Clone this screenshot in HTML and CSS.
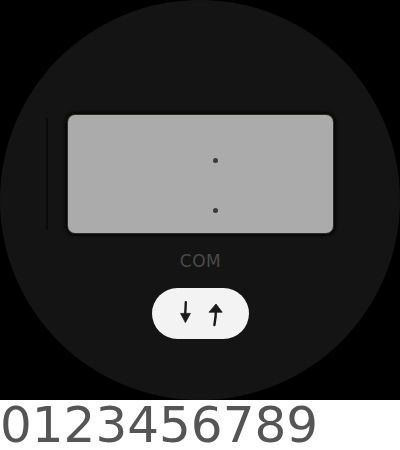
FILE: index.html
```html
<!DOCTYPE html>
<html>
<head>
<meta charset="utf-8">
<link rel="stylesheet" href="styles.css">
</head>
<body>
<div class="watch">
  <div class="face">
    <div class="display-row">
      <div class="rule"></div>
      <div class="screen">
        <span class="dot"></span>
        <span class="dot"></span>
      </div>
    </div>
    <div class="label">COM</div>
    <button class="swap" type="button" aria-label="swap">
      <svg width="46" height="26" viewBox="0 0 46 26" fill="none">
        <path d="M7.8 1.2 Q7.6 8 7.1 14" stroke="#1a1a1a" stroke-width="2.4" stroke-linecap="round"/>
        <path d="M2.6 12.4 L12.4 12.4 L7.4 21.6 Z" fill="#1a1a1a" stroke="#1a1a1a" stroke-width="0.8" stroke-linejoin="round"/>
        <path d="M38 6 Q38 16 36.4 24" stroke="#1a1a1a" stroke-width="2.4" stroke-linecap="round"/>
        <path d="M31 11.2 L44.2 11.2 L38 3 Z" fill="#1a1a1a" stroke="#1a1a1a" stroke-width="0.8" stroke-linejoin="round"/>
      </svg>
    </button>
  </div>
</div>
<div class="digits">0123456789</div>
</body>
</html>
```
FILE: styles.css
```css
html, body {
  margin: 0;
  padding: 0;
  background: #ffffff;
}

.watch {
  width: 400px;
  height: 400px;
  background: #000000;
}

.face {
  width: 400px;
  height: 400px;
  border-radius: 50%;
  background: #141414;
  display: flex;
  flex-direction: column;
  align-items: center;
  padding-top: 115px;
  box-sizing: border-box;
}

.display-row {
  align-self: flex-start;
  display: flex;
  align-items: center;
  padding-left: 46px;
}

.rule {
  width: 2px;
  height: 112px;
  background: #0a0a0a;
  margin-right: 20px;
}

.screen {
  width: 265px;
  height: 118px;
  box-sizing: border-box;
  border-radius: 7px;
  background: #ababab;
  box-shadow: 0 0 0 1px #2e2d22, 0 0 3px 3px #060606;
  display: flex;
  flex-direction: column;
  align-items: flex-start;
  padding-left: 145px;
  padding-top: 43px;
  gap: 45px;
}

.dot {
  width: 5px;
  height: 5px;
  border-radius: 50%;
  background: #3a3a3a;
}

.label {
  margin-top: 18px;
  font-family: "DejaVu Sans", sans-serif;
  font-size: 17px;
  line-height: 20px;
  color: #4a4a4a;
  letter-spacing: 0.5px;
  padding-left: 1px;
}

.swap {
  margin-top: 17px;
  width: 97px;
  height: 51px;
  border: none;
  border-radius: 26px;
  background: #f3f3f3;
  display: flex;
  align-items: center;
  justify-content: center;
  padding: 0;
  margin-left: 1px;
}

.swap svg {
  display: block;
}

.digits {
  font-family: "DejaVu Sans", sans-serif;
  font-size: 50px;
  line-height: 50px;
  color: #555555;
}
```
